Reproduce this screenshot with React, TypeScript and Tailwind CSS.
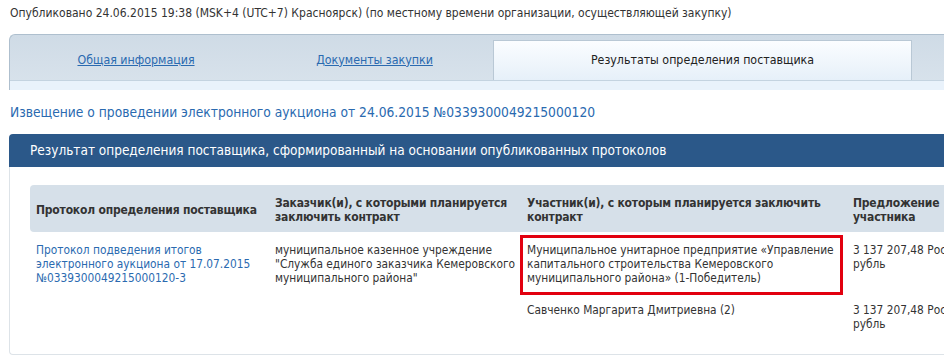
import React from "react";

export default function App() {
  return (
    <div className="w-[944px] h-[364px] overflow-hidden bg-white text-[#333] font-['DejaVu_Sans_Condensed','DejaVu_Sans',sans-serif]">
      <div className="w-[1100px]">
        <div className="pl-[10px] pt-[5px] text-[12px] leading-[16px]">
          Опубликовано 24.06.2015 19:38 (MSK+4 (UTC+7) Красноярск) (по местному времени организации, осуществляющей закупку)
        </div>

        {/* Tabs */}
        <div className="ml-[9px] mt-[13px] rounded-tl-[6px] border-t border-l border-[#aebfce] bg-gradient-to-b from-[#cfdbe6] to-[#d9e3ec]">
          <div className="flex items-end pl-[6px] pt-[4px] h-[45px]">
            <div className="w-[240px] h-[40px] flex items-center justify-center">
              <span className="text-[12.3px] text-[#2a6ab0] underline">Общая информация</span>
            </div>
            <div className="w-[237px] h-[40px] flex items-center justify-center">
              <span className="text-[12.3px] text-[#2a6ab0] underline">Документы закупки</span>
            </div>
            <div className="w-[419px] h-[40px] flex items-center justify-center border-t border-l border-r border-[#b9c8d5] bg-gradient-to-b from-[#fbfdff] to-[#e6f0f9]">
              <span className="text-[12.3px] text-[#222]">Результаты определения поставщика</span>
            </div>
          </div>
          <div className="h-[10px] bg-[#e9f2fb] border-t border-[#c4d3e0]"></div>
        </div>

        <div className="pl-[10px] mt-[14px] text-[13.7px] leading-[17px] text-[#2a6ab0]">
          Извещение о проведении электронного аукциона от 24.06.2015 №0339300049215000120
        </div>

        {/* Result block */}
        <div className="ml-[9px] mt-[13px]">
          <div className="h-[33px] flex items-center pl-[21px] rounded-tl-[4px] bg-[#2b5889] text-white text-[13.5px]">
            Результат определения поставщика, сформированный на основании опубликованных протоколов
          </div>
          <div className="border-l border-b border-[#dde3e8] rounded-bl-[4px] pl-[20px] pt-[18px] pb-[15px]">
            <table className="table-fixed w-[975px] border-collapse text-[11.8px] leading-[14px]">
              <colgroup>
                <col className="w-[239px]" />
                <col className="w-[252px]" />
                <col className="w-[326px]" />
                <col className="w-[158px]" />
              </colgroup>
              <thead>
                <tr className="bg-[#d6e0e9] text-[12px] leading-[14px] text-[#333]">
                  <th className="h-[47px] pl-[6px] pr-[4px] pt-[3px] text-left align-middle font-bold tracking-[-0.2px] rounded-l-[4px]">
                    Протокол определения поставщика
                  </th>
                  <th className="pl-[6px] pr-[4px] pt-[3px] text-left align-middle font-bold tracking-[-0.2px]">
                    Заказчик(и), с которыми планируется заключить контракт
                  </th>
                  <th className="pl-[6px] pr-[4px] pt-[3px] text-left align-middle font-bold tracking-[-0.2px]">
                    Участник(и), с которым планируется заключить контракт
                  </th>
                  <th className="pl-[6px] pr-0 pt-[3px] text-left align-middle font-bold tracking-[-0.2px]">
                    Предложение участника
                  </th>
                </tr>
              </thead>
              <tbody>
                <tr>
                  <td className="pl-[6px] pr-[6px] pt-[11px] pb-[11px] align-top text-[#2a6ab0]">
                    Протокол подведения итогов электронного аукциона от 17.07.2015 №0339300049215000120-3
                  </td>
                  <td className="pl-[6px] pr-[2px] pt-[11px] pb-[11px] align-top">
                    муниципальное казенное учреждение "Служба единого заказчика Кемеровского муниципального района"
                  </td>
                  <td className="relative pl-[6px] pr-[6px] pt-[11px] pb-[11px] align-top">
                    Муниципальное унитарное предприятие «Управление капитального строительства Кемеровского муниципального района» (1-Победитель)
                    <div className="absolute left-[-1px] right-[4px] top-[3px] bottom-[1px] border-[3px] border-[#e2000f]"></div>
                  </td>
                  <td className="pl-[6px] pr-0 pt-[11px] pb-[11px] align-top">
                    3 137 207,48 Российский рубль
                  </td>
                </tr>
                <tr>
                  <td className="pl-[6px] pr-[6px] pt-[7px] pb-[8px] align-top"></td>
                  <td className="pl-[6px] pr-[2px] pt-[7px] pb-[8px] align-top"></td>
                  <td className="pl-[6px] pr-[6px] pt-[7px] pb-[8px] align-top">
                    Савченко Маргарита Дмитриевна (2)
                  </td>
                  <td className="pl-[6px] pr-0 pt-[7px] pb-[8px] align-top">
                    3 137 207,48 Российский рубль
                  </td>
                </tr>
              </tbody>
            </table>
          </div>
        </div>
      </div>
    </div>
  );
}
